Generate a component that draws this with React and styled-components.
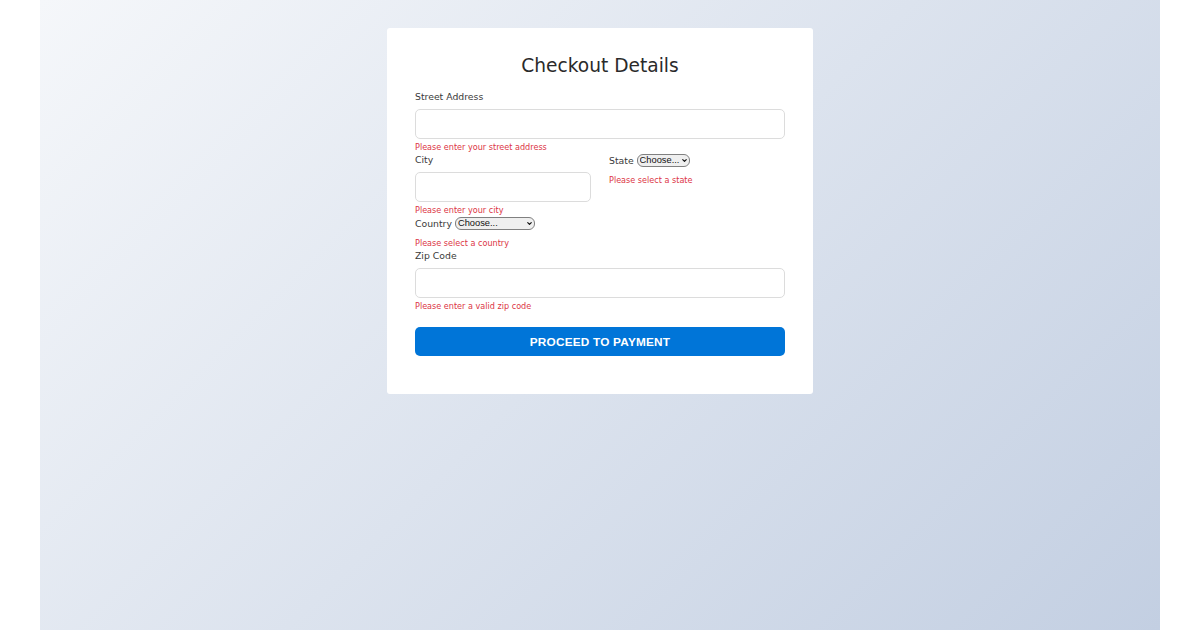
import React, { useState } from 'react';
import styled, { createGlobalStyle } from 'styled-components';
import { ChevronDown } from 'lucide-react';

const GlobalStyle = createGlobalStyle`
  html, body {
    margin: 0;
    padding: 0;
    background: #fff;
  }
  body {
    font-family: 'DejaVu Sans', sans-serif;
  }
`;

const Page = styled.div`
  max-width: 1120px;
  min-height: 630px;
  margin: 0 auto;
  padding-top: 28px;
  box-sizing: border-box;
  background: linear-gradient(135deg, #f5f7fa 0%, #c3cfe2 100%);
`;

const Card = styled.form`
  width: 426px;
  box-sizing: border-box;
  margin: 0 auto;
  padding: 27px 28px 38px;
  background: #fff;
  border-radius: 3px;
`;

const Title = styled.h2`
  margin: 0 0 14px;
  font-size: 18.6px;
  line-height: 22px;
  font-weight: 400;
  color: #2a2a2a;
  text-align: center;
`;

const Row = styled.div`
  display: grid;
  grid-template-columns: 1fr 1fr;
  column-gap: 18px;
`;

const Group = styled.div`
  margin-bottom: 2px;
`;

const Label = styled.label`
  display: block;
  margin-bottom: 6px;
  font-size: 9.3px;
  line-height: 12px;
  color: #3a3a3a;
`;

const InlineLabel = styled.label`
  display: flex;
  align-items: center;
  gap: 3px;
  height: 14px;
  margin: -1px 0 8px;
  font-size: 9.3px;
  color: #3a3a3a;
`;

const Input = styled.input`
  display: block;
  width: 100%;
  height: 30px;
  box-sizing: border-box;
  border: 1px solid #dcdcdc;
  border-radius: 5px;
  padding: 0 8px;
  font-size: 11px;
  background: #fff;
  outline: none;
`;

const SelectWrap = styled.span`
  position: relative;
  display: inline-flex;
  width: ${(p) => p.$width}px;
  height: 13px;

  svg {
    position: absolute;
    right: 2px;
    top: 3px;
    pointer-events: none;
    color: #111;
  }
`;

const Select = styled.select`
  appearance: none;
  width: 100%;
  height: 100%;
  box-sizing: border-box;
  margin: 0;
  padding: 0 9px 0 2px;
  border: 1px solid #808080;
  border-radius: 6px;
  background: #efefef;
  color: #111;
  font-family: 'Liberation Sans', Arial, sans-serif;
  font-size: 9.3px;
  line-height: 11px;
  outline: none;
`;

const Error = styled.div`
  margin-top: 3px;
  font-size: 8.1px;
  line-height: 10px;
  color: #dc3545;
`;

const Button = styled.button`
  display: block;
  width: 100%;
  height: 29px;
  margin-top: 16px;
  border: none;
  border-radius: 5px;
  background: #0075d8;
  color: #fff;
  font-family: 'Liberation Sans', Arial, sans-serif;
  font-weight: 700;
  font-size: 11.8px;
  letter-spacing: 0.2px;
  cursor: pointer;
`;

const states = ['AL', 'CA', 'NY', 'TX', 'WA'];
const countries = ['United States', 'Canada', 'Mexico'];

const Dropdown = ({ width, options, ...props }) => (
  <SelectWrap $width={width}>
    <Select {...props}>
      <option value="">Choose...</option>
      {options.map((o) => (
        <option key={o} value={o}>
          {o}
        </option>
      ))}
    </Select>
    <ChevronDown size={7} strokeWidth={4} />
  </SelectWrap>
);

const App = () => {
  const [form, setForm] = useState({ street: '', city: '', state: '', country: '', zip: '' });
  const handleChange = (e) => setForm({ ...form, [e.target.name]: e.target.value });

  return (
    <>
      <GlobalStyle />
      <Page>
        <Card onSubmit={(e) => e.preventDefault()}>
          <Title>Checkout Details</Title>
          <Group>
            <Label>Street Address</Label>
            <Input name="street" value={form.street} onChange={handleChange} />
            <Error>Please enter your street address</Error>
          </Group>
          <Row>
            <Group>
              <Label>City</Label>
              <Input name="city" value={form.city} onChange={handleChange} />
              <Error>Please enter your city</Error>
            </Group>
            <Group>
              <InlineLabel>
                State
                <Dropdown width={53} options={states} name="state" value={form.state} onChange={handleChange} />
              </InlineLabel>
              <Error>Please select a state</Error>
            </Group>
          </Row>
          <Group>
            <InlineLabel>
              Country
              <Dropdown width={80} options={countries} name="country" value={form.country} onChange={handleChange} />
            </InlineLabel>
            <Error>Please select a country</Error>
          </Group>
          <Group>
            <Label>Zip Code</Label>
            <Input name="zip" value={form.zip} onChange={handleChange} />
            <Error>Please enter a valid zip code</Error>
          </Group>
          <Button type="submit">PROCEED TO PAYMENT</Button>
        </Card>
      </Page>
    </>
  );
};

export default App;
